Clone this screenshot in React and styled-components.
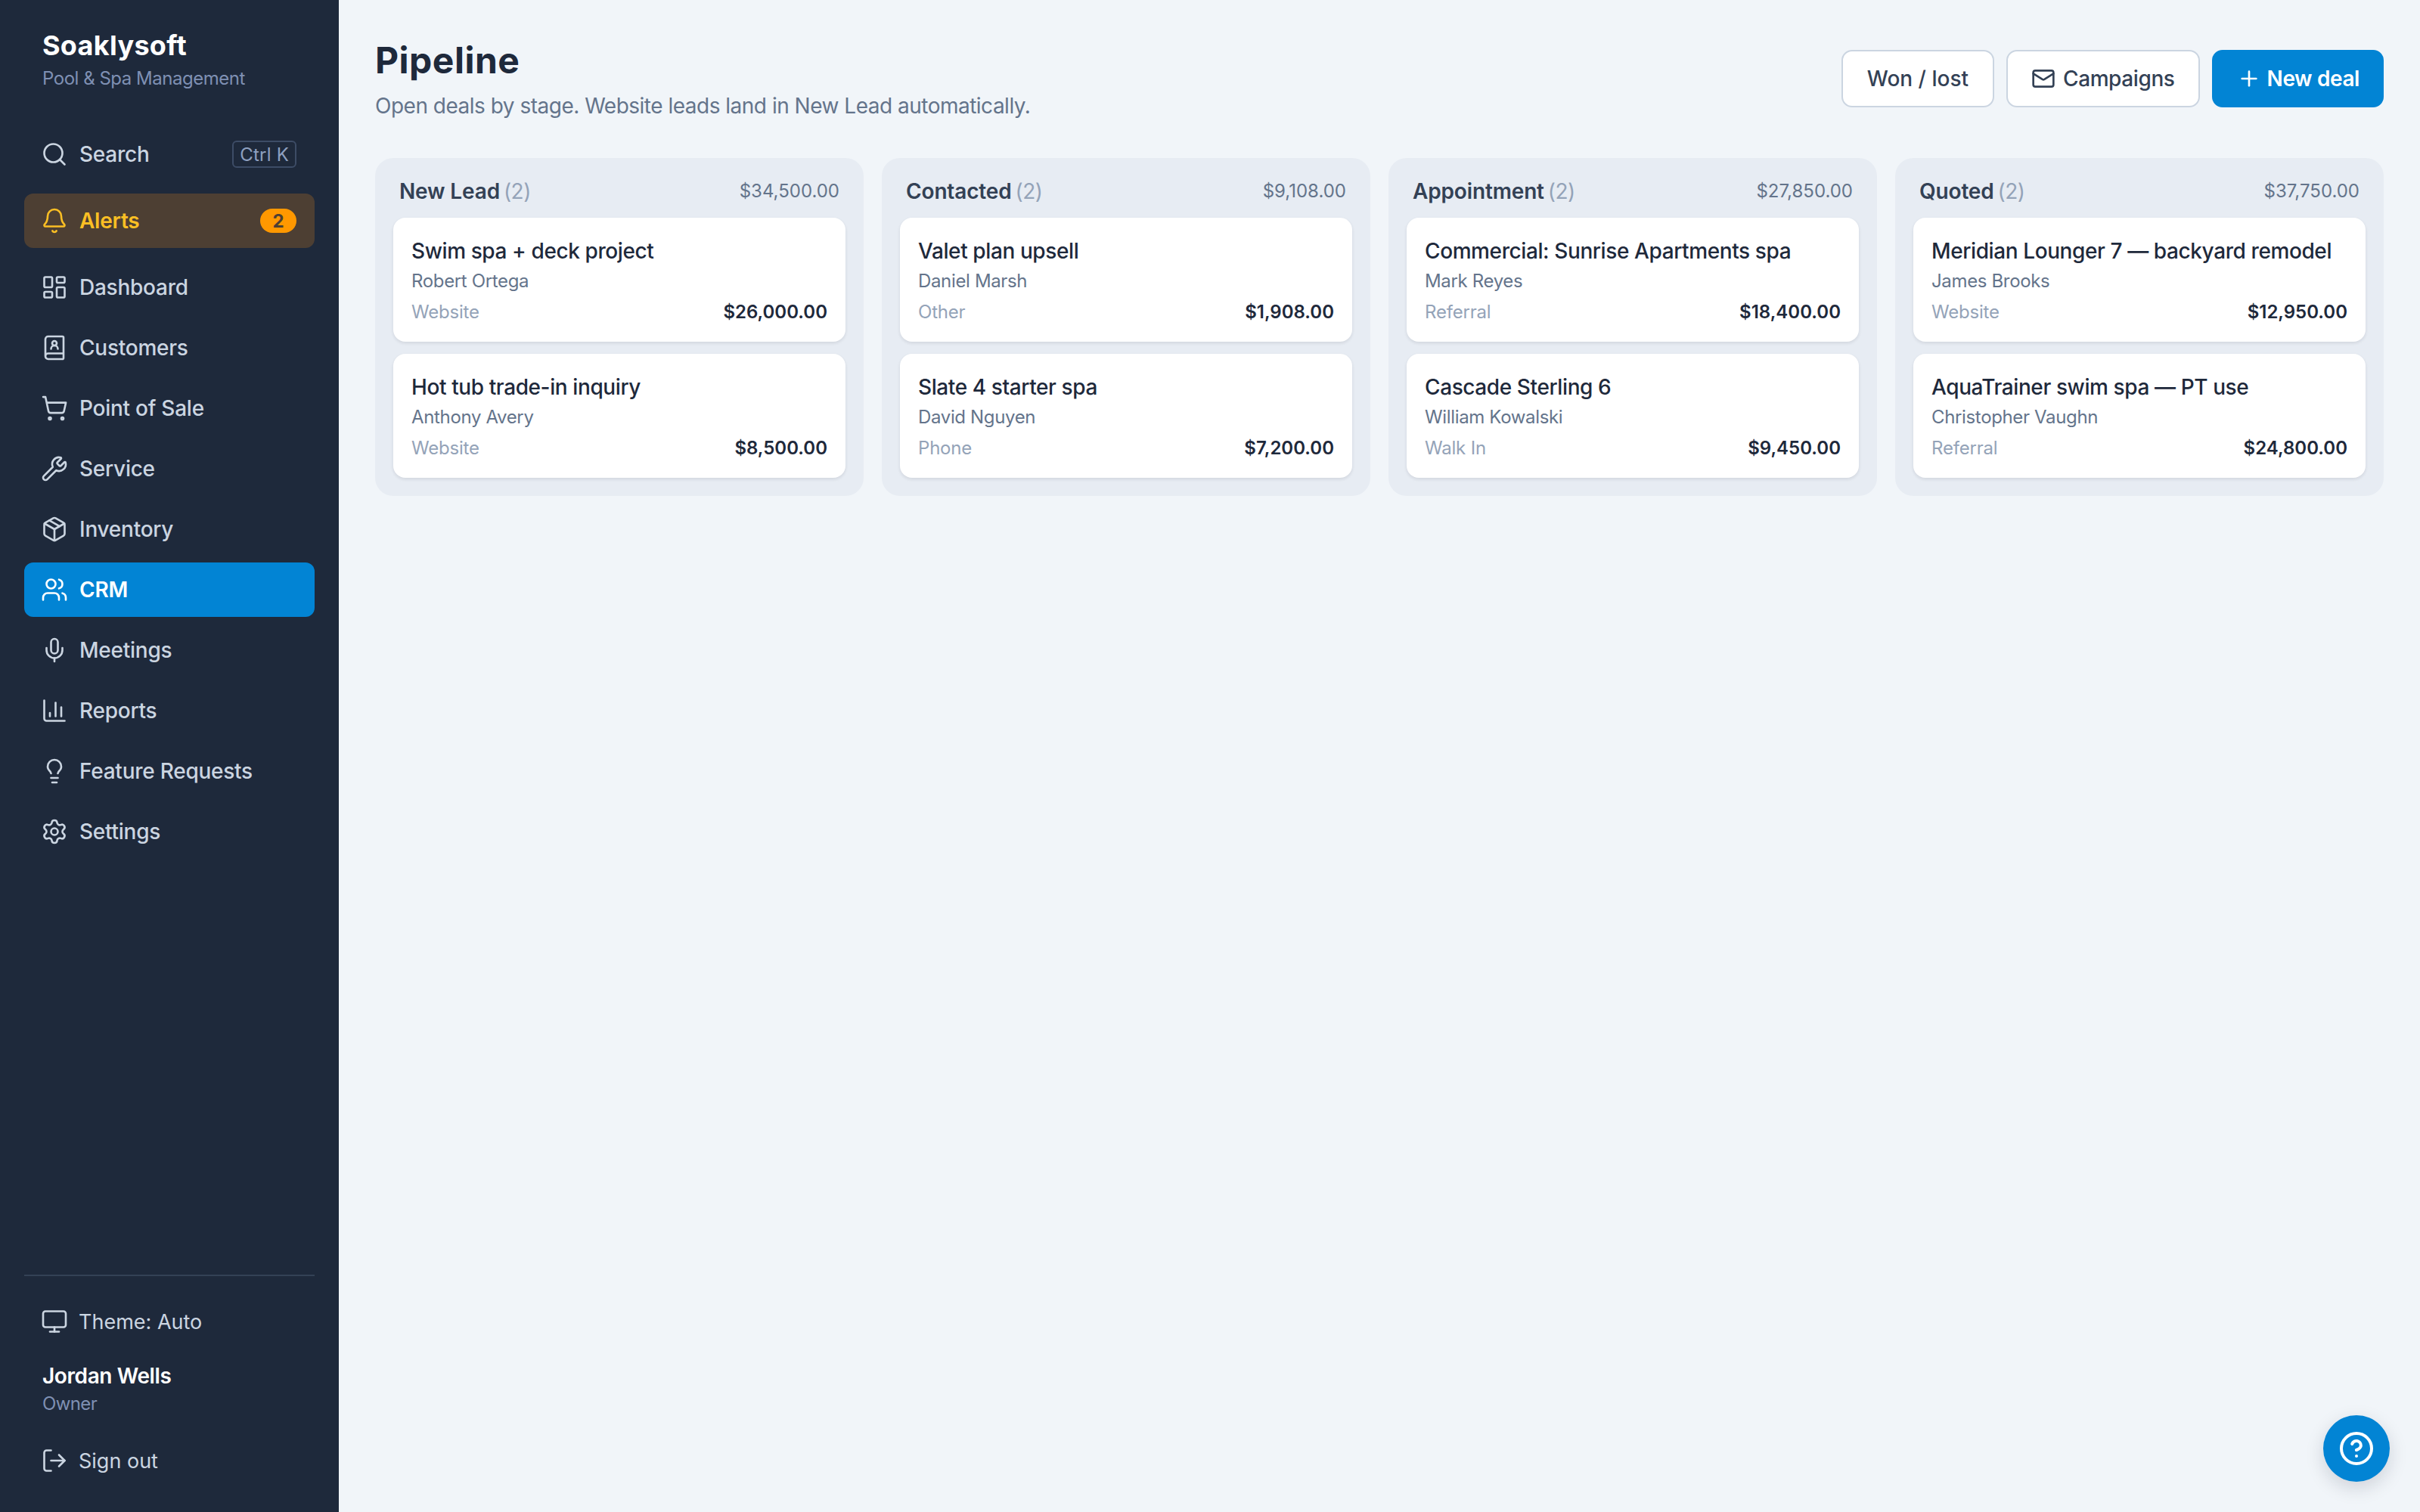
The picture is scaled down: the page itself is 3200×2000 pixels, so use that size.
import React from "react";
import styled, { createGlobalStyle } from "styled-components";
import {
  Search, Bell, LayoutDashboard, BookUser, ShoppingCart, Wrench, Package, Users, Mic,
  ChartColumn, Lightbulb, Settings, Monitor, LogOut, Mail, Plus, CircleHelp,
} from "lucide-react";

const Global = createGlobalStyle`
  html, body { margin: 0; padding: 0; height: 100%; background: #f1f5f9; }
  body { font-family: Inter, "Liberation Sans", sans-serif; overflow: hidden; }
  * { box-sizing: border-box; }
`;

const Shell = styled.div`
  display: flex;
  width: 3200px;
  height: 2000px;
  background: #f1f5f9;
`;

const Sidebar = styled.aside`
  width: 448px;
  flex: none;
  background: #1e293b;
  padding: 0 32px;
  display: flex;
  flex-direction: column;
`;

const Brand = styled.div`
  height: 168px;
  padding: 38px 0 0 24px;
`;

const BrandName = styled.div`
  font-size: 36px;
  line-height: 44px;
  font-weight: 700;
  color: #fff;
  letter-spacing: 0.3px;
`;

const BrandTag = styled.div`
  margin-top: 6px;
  font-size: 24px;
  line-height: 32px;
  letter-spacing: -0.48px;
  color: #7f90b3;
`;

const Nav = styled.nav`
  display: flex;
  flex-direction: column;
  gap: 8px;
`;

const NavItem = styled.div`
  height: 72px;
  border-radius: 12px;
  padding: 0 24px 0 22px;
  display: flex;
  align-items: center;
  gap: 15px;
  font-size: 28px;
  letter-spacing: -0.25px;
  font-weight: ${(p) => (p.$active || p.$alert ? 600 : 500)};
  color: ${(p) => (p.$active ? "#fff" : p.$alert ? "#fbbf24" : "#cbd5e1")};
  background: ${(p) => (p.$active ? "#0284d4" : p.$alert ? "#4d3f33" : "transparent")};
  margin-bottom: ${(p) => (p.$sep ? "8px" : "0")};

  svg { width: 36px; height: 36px; flex: none; stroke-width: 1.75; }
`;

const Label = styled.span`
  flex: 1;
`;

const Kbd = styled.span`
  border: 2px solid #3d4c66;
  border-radius: 6px;
  height: 36px;
  padding: 0 8px;
  display: flex;
  align-items: center;
  font-size: 24px;
  font-weight: 400;
  letter-spacing: 0.2px;
  color: #8ea0c0;
`;

const Badge = styled.span`
  width: 48px;
  height: 32px;
  border-radius: 16px;
  background: #ff9800;
  color: #4d3f33;
  font-size: 24px;
  font-weight: 700;
  display: flex;
  align-items: center;
  justify-content: center;
`;

const Footer = styled.div`
  margin-top: auto;
  border-top: 2px solid #334155;
  padding-top: 24px;
  padding-bottom: 32px;
`;

const FootItem = styled.div`
  height: 72px;
  padding-left: 22px;
  display: flex;
  align-items: center;
  gap: 14px;
  font-size: 27px;
  color: #cbd5e1;

  svg { width: 36px; height: 36px; flex: none; stroke-width: 1.75; }
`;

const User = styled.div`
  padding: 17px 0 23px 24px;
`;

const UserName = styled.div`
  font-size: 28px;
  line-height: 38px;
  font-weight: 600;
  letter-spacing: -0.4px;
  color: #fff;
`;

const UserRole = styled.div`
  font-size: 24px;
  line-height: 32px;
  margin-top: 2px;
  letter-spacing: -0.6px;
  color: #7f90b3;
`;

const Main = styled.main`
  flex: 1;
  padding: 0 48px;
`;

const Header = styled.header`
  height: 209px;
  display: flex;
  justify-content: space-between;
  padding-top: 46px;
`;

const Title = styled.h1`
  margin: 0;
  font-size: 48px;
  line-height: 68px;
  font-weight: 700;
  letter-spacing: 0.5px;
  color: #1e293b;
`;

const Subtitle = styled.p`
  margin: 6px 0 0;
  font-size: 28px;
  line-height: 40px;
  letter-spacing: -0.5px;
  color: #64748b;
`;

const Actions = styled.div`
  display: flex;
  gap: 16px;
  padding-top: 20px;
`;

const Button = styled.button`
  height: 76px;
  padding: ${(p) => (p.$primary ? "0 30px 0 31px" : p.$icon ? "0 31px" : "0 32px")};
  border-radius: 14px;
  border: 2px solid ${(p) => (p.$primary ? "#0284d4" : "#cbd5e1")};
  background: ${(p) => (p.$primary ? "#0284d4" : "#fff")};
  color: ${(p) => (p.$primary ? "#fff" : "#334155")};
  font-family: inherit;
  font-size: 28px;
  font-weight: ${(p) => (p.$primary ? 600 : 500)};
  letter-spacing: ${(p) => (p.$icon || p.$primary ? "-0.4px" : "0")};
  display: flex;
  align-items: center;
  gap: ${(p) => (p.$icon ? "10px" : "8px")};

  svg { width: 32px; height: 32px; stroke-width: 2; }
`;

const Board = styled.section`
  display: grid;
  grid-template-columns: repeat(4, 646px);
  gap: 24px;
  align-items: start;
`;

const Column = styled.div`
  background: #e7ecf3;
  border-radius: 24px;
  padding: 24px;
`;

const ColumnHead = styled.div`
  height: 55px;
  padding: 0 8px 16px;
  display: flex;
  justify-content: space-between;
  align-items: center;
`;

const ColumnName = styled.div`
  font-size: 28px;
  font-weight: 600;
  letter-spacing: -0.15px;
  color: #334155;
`;

const Count = styled.span`
  margin-left: -2px;
  font-weight: 400;
  letter-spacing: -0.5px;
  color: #94a3b8;
`;

const ColumnTotal = styled.div`
  font-size: 24px;
  color: #64748b;
`;

const Cards = styled.div`
  display: flex;
  flex-direction: column;
  gap: 16px;
`;

const Card = styled.article`
  height: 164px;
  background: #fff;
  border-radius: 16px;
  padding: 24px;
  box-shadow: 0 2px 4px rgba(15, 23, 42, 0.1);
`;

const CardTitle = styled.div`
  font-size: 28px;
  line-height: 40px;
  font-weight: 500;
  letter-spacing: -0.4px;
  color: #1e293b;
`;

const CardCustomer = styled.div`
  font-size: 24px;
  line-height: 40px;
  letter-spacing: -0.35px;
  color: #64748b;
`;

const CardFoot = styled.div`
  display: flex;
  justify-content: space-between;
  align-items: center;
  height: 40px;
`;

const Source = styled.span`
  font-size: 24px;
  letter-spacing: -0.2px;
  color: #94a3b8;
`;

const Amount = styled.span`
  font-size: 24px;
  font-weight: 600;
  color: #1e293b;
`;

const HelpButton = styled.button`
  position: fixed;
  right: 40px;
  bottom: 40px;
  width: 88px;
  height: 88px;
  padding: 0;
  border: 0;
  border-radius: 50%;
  background: #0284d4;
  color: #fff;
  display: flex;
  align-items: center;
  justify-content: center;
  box-shadow: 0 8px 24px rgba(15, 23, 42, 0.15);

  svg { width: 48px; height: 48px; }
`;

const navItems = [
  ["Dashboard", LayoutDashboard],
  ["Customers", BookUser],
  ["Point of Sale", ShoppingCart],
  ["Service", Wrench],
  ["Inventory", Package],
  ["CRM", Users, true],
  ["Meetings", Mic],
  ["Reports", ChartColumn],
  ["Feature Requests", Lightbulb],
  ["Settings", Settings],
];

const columns = [
  { name: "New Lead", total: "$34,500.00", deals: [
    ["Swim spa + deck project", "Robert Ortega", "Website", "$26,000.00"],
    ["Hot tub trade-in inquiry", "Anthony Avery", "Website", "$8,500.00"],
  ]},
  { name: "Contacted", total: "$9,108.00", deals: [
    ["Valet plan upsell", "Daniel Marsh", "Other", "$1,908.00"],
    ["Slate 4 starter spa", "David Nguyen", "Phone", "$7,200.00"],
  ]},
  { name: "Appointment", total: "$27,850.00", deals: [
    ["Commercial: Sunrise Apartments spa", "Mark Reyes", "Referral", "$18,400.00"],
    ["Cascade Sterling 6", "William Kowalski", "Walk In", "$9,450.00"],
  ]},
  { name: "Quoted", total: "$37,750.00", deals: [
    ["Meridian Lounger 7 — backyard remodel", "James Brooks", "Website", "$12,950.00"],
    ["AquaTrainer swim spa — PT use", "Christopher Vaughn", "Referral", "$24,800.00"],
  ]},
];

export default function App() {
  return (
    <Shell>
      <Global />
      <Sidebar>
        <Brand>
          <BrandName>Soaklysoft</BrandName>
          <BrandTag>Pool &amp; Spa Management</BrandTag>
        </Brand>
        <Nav>
          <NavItem $sep>
            <Search />
            <Label>Search</Label>
            <Kbd>Ctrl K</Kbd>
          </NavItem>
          <NavItem $alert $sep>
            <Bell />
            <Label>Alerts</Label>
            <Badge>2</Badge>
          </NavItem>
          {navItems.map(([label, Icon, active]) => (
            <NavItem key={label} $active={active}>
              <Icon />
              <Label>{label}</Label>
            </NavItem>
          ))}
        </Nav>
        <Footer>
          <FootItem>
            <Monitor />
            <span>Theme: Auto</span>
          </FootItem>
          <User>
            <UserName>Jordan Wells</UserName>
            <UserRole>Owner</UserRole>
          </User>
          <FootItem>
            <LogOut />
            <span>Sign out</span>
          </FootItem>
        </Footer>
      </Sidebar>
      <Main>
        <Header>
          <div>
            <Title>Pipeline</Title>
            <Subtitle>Open deals by stage. Website leads land in New Lead automatically.</Subtitle>
          </div>
          <Actions>
            <Button>Won / lost</Button>
            <Button $icon><Mail />Campaigns</Button>
            <Button $primary><Plus />New deal</Button>
          </Actions>
        </Header>
        <Board>
          {columns.map((col) => (
            <Column key={col.name}>
              <ColumnHead>
                <ColumnName>{col.name} <Count>({col.deals.length})</Count></ColumnName>
                <ColumnTotal>{col.total}</ColumnTotal>
              </ColumnHead>
              <Cards>
                {col.deals.map(([title, customer, source, amount]) => (
                  <Card key={title}>
                    <CardTitle>{title}</CardTitle>
                    <CardCustomer>{customer}</CardCustomer>
                    <CardFoot>
                      <Source>{source}</Source>
                      <Amount>{amount}</Amount>
                    </CardFoot>
                  </Card>
                ))}
              </Cards>
            </Column>
          ))}
        </Board>
      </Main>
      <HelpButton><CircleHelp /></HelpButton>
    </Shell>
  );
}
